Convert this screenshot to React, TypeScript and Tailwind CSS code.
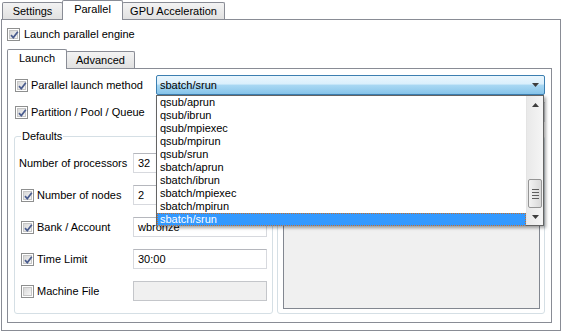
import React from 'react'

const Check = ({ checked = true }: { checked?: boolean }) => {
    return (
        <div className="w-[13px] h-[13px] shrink-0 border border-[#8e8f8f] bg-white p-px">
            <div className="w-full h-full bg-gradient-to-br from-[#d8d8d8] to-[#f6f6f6] border border-[#c6c6c6] relative">
                {checked && (
                    <svg className="absolute -left-px -top-px" width="11" height="11" viewBox="0 0 11 11">
                        <path d="M2 5.2 L4.3 7.6 L8.8 1.8" fill="none" stroke="#4a5c8e" strokeWidth="1.7" />
                    </svg>
                )}
            </div>
        </div>
    )
}

const Tab = ({ label, selected, width }: { label: string; selected?: boolean; width: string }) => {
    if (selected) {
        return (
            <div className={`${width} h-[20px] -ml-px first:ml-0 relative z-10 bg-white border border-b-0 border-[#898c95] rounded-t-[2px] flex items-center justify-center pb-[2px]`}>
                {label}
            </div>
        )
    }
    return (
        <div className={`${width} h-[17px] mb-px -ml-px first:ml-0 bg-gradient-to-b from-[#f3f3f3] to-[#e1e1e1] border border-b-0 border-[#898c95] rounded-t-[2px] flex items-center justify-center`}>
            {label}
        </div>
    )
}

const TextBox = ({ value, disabled }: { value?: string; disabled?: boolean }) => {
    return (
        <div className={`w-[134px] h-[20px] flex items-center pl-[4px] border ${disabled ? 'bg-[#f0f0f0] border-[#c4c6ca]' : 'bg-white border-[#d7d9de] border-t-[#b5b7bd]'}`}>
            {value}
        </div>
    )
}

const items = ['qsub/aprun', 'qsub/ibrun', 'qsub/mpiexec', 'qsub/mpirun', 'qsub/srun', 'sbatch/aprun', 'sbatch/ibrun', 'sbatch/mpiexec', 'sbatch/mpirun', 'sbatch/srun']

const Arrow = ({ up }: { up?: boolean }) => (
    <svg width="7" height="4" viewBox="0 0 7 4">
        <path d={up ? 'M0 4 L3.5 0 L7 4 Z' : 'M0 0 L7 0 L3.5 4 Z'} fill="#3d3d3d" />
    </svg>
)

const App = () => {
    return (
        <div className="w-[563px] h-[335px] bg-white font-['Liberation_Sans',Arial,sans-serif] text-[11px] leading-none text-black overflow-hidden">
            <div className="flex items-end h-[20px] pl-[2px]">
                <Tab label="Settings" width="w-[61px]" />
                <Tab label="Parallel" width="w-[61px]" selected />
                <Tab label="GPU Acceleration" width="w-[103px]" />
            </div>
            <div className="ml-px -mt-px w-[560px] h-[312px] border border-[#898c95] bg-white">
                <div className="flex items-center gap-[4px] ml-[5px] mt-[8px] h-[13px]">
                    <Check />
                    <span>Launch parallel engine</span>
                </div>
                <div className="flex items-end h-[20px] ml-[5px] mt-[8px]">
                    <Tab label="Launch" width="w-[60px]" selected />
                    <Tab label="Advanced" width="w-[69px]" />
                </div>
                <div className="relative ml-[5px] -mt-px w-[545px] h-[255px] border border-[#898c95] bg-white">
                    <div className="flex items-center h-[20px] mt-[6px] pl-[7px]">
                        <div className="w-[141px] flex items-center gap-[3px]">
                            <Check />
                            <span>Parallel launch method</span>
                        </div>
                        <div className="w-[389px] h-[20px] border border-[#3c7fb1] rounded-[2px] flex items-center justify-between pl-[3px] pr-[5px] bg-[linear-gradient(to_bottom,#eaf6fd_0%,#d9effc_45%,#a9d8f3_50%,#86c4ea_100%)]">
                            <span>sbatch/srun</span>
                            <Arrow />
                        </div>
                    </div>
                    <div className="flex items-center h-[20px] mt-[7px] pl-[7px]">
                        <div className="w-[141px] flex items-center gap-[3px]">
                            <Check />
                            <span>Partition / Pool / Queue</span>
                        </div>
                        <div className="w-[389px] h-[20px] border border-[#d7d9de] border-t-[#b5b7bd]" />
                    </div>
                    <div className="flex items-start mt-[8px] ml-[6px]">
                        <fieldset className="w-[259px] h-[184px] border border-[#d5dfe5] rounded-[3px]">
                            <legend className="ml-[6px] px-px leading-[13px]">Defaults</legend>
                            <div className="flex flex-col gap-[12px] mt-[10px] pl-[4px]">
                                <div className="flex items-center h-[20px]">
                                    <span className="w-[114px]">Number of processors</span>
                                    <TextBox value="32" />
                                </div>
                                <div className="flex items-center h-[20px]">
                                    <div className="w-[114px] flex items-center gap-[3px] pl-[2px]">
                                        <Check />
                                        <span>Number of nodes</span>
                                    </div>
                                    <TextBox value="2" />
                                </div>
                                <div className="flex items-center h-[20px]">
                                    <div className="w-[114px] flex items-center gap-[3px] pl-[2px]">
                                        <Check />
                                        <span>Bank / Account</span>
                                    </div>
                                    <TextBox value="wbronze" />
                                </div>
                                <div className="flex items-center h-[20px]">
                                    <div className="w-[114px] flex items-center gap-[3px] pl-[2px]">
                                        <Check />
                                        <span>Time Limit</span>
                                    </div>
                                    <TextBox value="30:00" />
                                </div>
                                <div className="flex items-center h-[20px]">
                                    <div className="w-[114px] flex items-center gap-[3px] pl-[2px]">
                                        <Check checked={false} />
                                        <span>Machine File</span>
                                    </div>
                                    <TextBox disabled />
                                </div>
                            </div>
                        </fieldset>
                        <div className="ml-[4px] mt-[6px] w-[268px] h-[178px] border border-[#d5dfe5] rounded-[3px] flex flex-col justify-end pb-[4px] pl-[5px]">
                            <div className="w-[257px] h-[160px] bg-[#f0f0f0] border border-[#828790]" />
                        </div>
                    </div>

                    {/* open dropdown list */}
                    <div className="absolute left-[148px] top-[26px] w-[388px] h-[131px] border border-[#646464] bg-white flex shadow-[2px_2px_3px_rgba(0,0,0,0.35)]">
                        <div className="flex-1 flex flex-col">
                            {items.map((item, i) => (
                                <div
                                    key={item}
                                    className={i === items.length - 1
                                        ? 'h-[13px] leading-[13px] pl-[3px] bg-[#3399ff] text-white outline-1 outline-dotted -outline-offset-1 outline-[#c8702b]'
                                        : 'h-[13px] leading-[13px] pl-[3px]'}
                                >
                                    {item}
                                </div>
                            ))}
                        </div>
                        <div className="w-[17px] flex flex-col bg-gradient-to-r from-[#e9e9e9] to-[#f5f5f5] border-l border-[#e4e4e4]">
                            <div className="h-[17px] flex items-center justify-center">
                                <Arrow up />
                            </div>
                            <div className="flex-1" />
                            <div className="h-[29px] mx-px border border-[#959595] rounded-[2px] bg-gradient-to-r from-[#f3f3f3] to-[#d9d9d9] flex flex-col items-center justify-center gap-[2px]">
                                <div className="w-[7px] h-px bg-[#5f5f5f]" />
                                <div className="w-[7px] h-px bg-[#5f5f5f]" />
                                <div className="w-[7px] h-px bg-[#5f5f5f]" />
                                <div className="w-[7px] h-px bg-[#5f5f5f]" />
                            </div>
                            <div className="h-[17px] flex items-center justify-center">
                                <Arrow />
                            </div>
                        </div>
                    </div>
                </div>
            </div>
        </div>
    )
}

export default App
